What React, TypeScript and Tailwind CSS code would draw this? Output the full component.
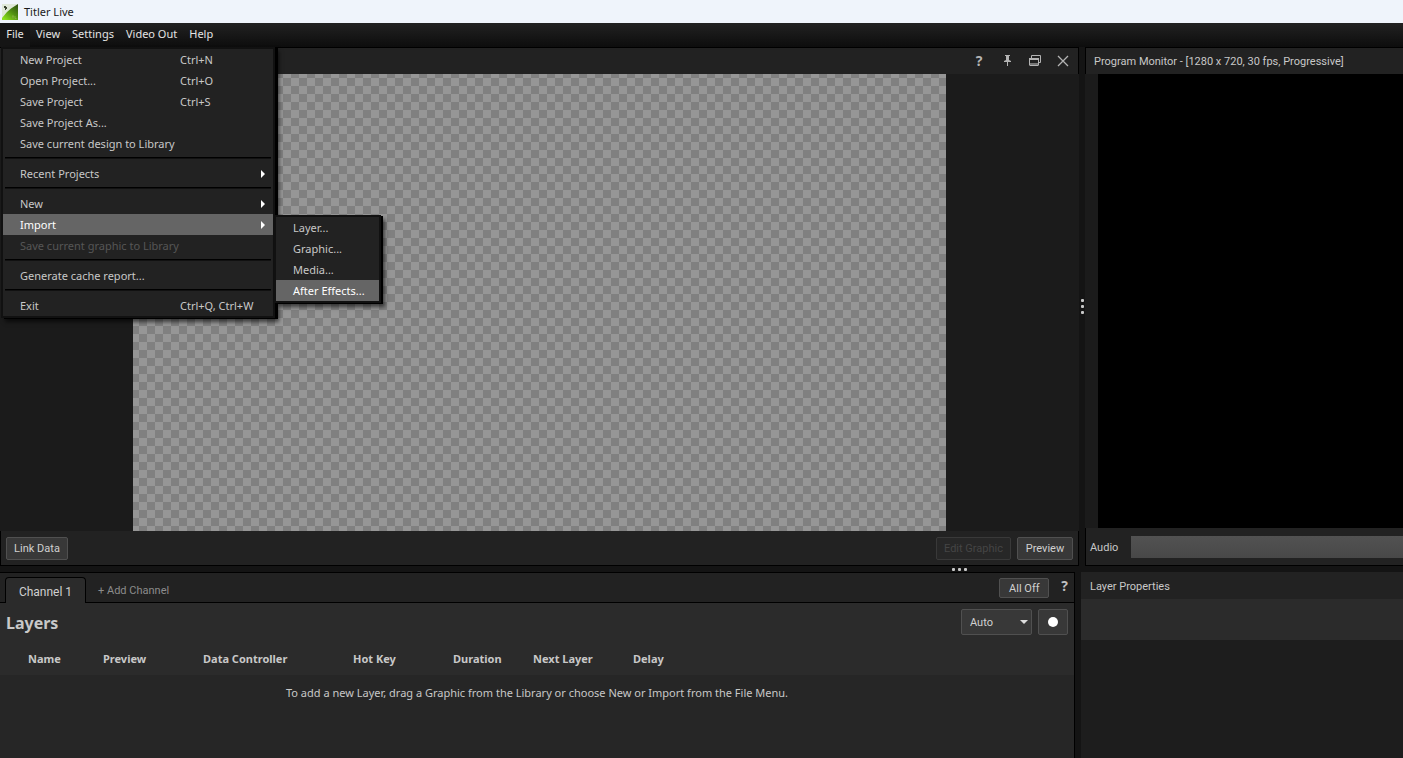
import type { ReactNode } from 'react';
import { clsx } from 'clsx';

interface MenuEntry {
  label: string;
  shortcut?: string;
  disabled?: boolean;
  active?: boolean;
  hasSubmenu?: boolean;
  children?: MenuEntry[];
}

const FILE_MENU: MenuEntry[][] = [
  [
    { label: 'New Project', shortcut: 'Ctrl+N' },
    { label: 'Open Project...', shortcut: 'Ctrl+O' },
    { label: 'Save Project', shortcut: 'Ctrl+S' },
    { label: 'Save Project As...' },
    { label: 'Save current design to Library' },
  ],
  [{ label: 'Recent Projects', hasSubmenu: true }],
  [
    { label: 'New', hasSubmenu: true },
    {
      label: 'Import',
      active: true,
      hasSubmenu: true,
      children: [
        { label: 'Layer...' },
        { label: 'Graphic...' },
        { label: 'Media...' },
        { label: 'After Effects...', active: true },
      ],
    },
    { label: 'Save current graphic to Library', disabled: true },
  ],
  [{ label: 'Generate cache report...' }],
  [{ label: 'Exit', shortcut: 'Ctrl+Q, Ctrl+W' }],
];

const COLUMNS = [
  { label: 'Name', className: 'w-[103px] pl-7' },
  { label: 'Preview', className: 'w-[100px]' },
  { label: 'Data Controller', className: 'w-[150px]' },
  { label: 'Hot Key', className: 'w-[100px]' },
  { label: 'Duration', className: 'w-[80px]' },
  { label: 'Next Layer', className: 'w-[100px]' },
  { label: 'Delay', className: '' },
];

function AppLogo() {
  return (
    <svg viewBox="0 0 16 16" className="size-4" aria-hidden="true">
      <defs>
        <linearGradient id="logo-green" x1="1" y1="0" x2="0.2" y2="1">
          <stop offset="0" stopColor="#2c4a10" />
          <stop offset="0.5" stopColor="#4f8f12" />
          <stop offset="1" stopColor="#8be01c" />
        </linearGradient>
      </defs>
      <rect width="16" height="16" fill="url(#logo-green)" />
      <path d="M0 0h16L9 4.5 5 8 0 14z" fill="#dfe8d8" />
      <path d="M2 2h2v1h1v2H4v1H3V4H2z" fill="#39422f" />
      <path d="M10 12h2M11 12v2.5M13 12v2.5h1.5" stroke="#8fb64f" strokeWidth="0.7" fill="none" />
    </svg>
  );
}

function MenuItem({ entry }: { entry: MenuEntry }) {
  return (
    <li role="none" className="relative">
      <button
        type="button"
        role="menuitem"
        disabled={entry.disabled}
        className={clsx(
          'flex h-[21px] w-full items-center pl-[17px] text-left whitespace-nowrap',
          entry.active && 'bg-[#656565] text-white',
          entry.disabled && 'text-[#565656]',
        )}
      >
        <span className={clsx('pt-0.5', entry.shortcut ? 'w-40' : 'flex-1')}>{entry.label}</span>
        {entry.shortcut && <span className="pt-0.5">{entry.shortcut}</span>}
        {entry.hasSubmenu && (
          <svg viewBox="0 0 4 8" className="mr-2 h-2 w-1" aria-hidden="true">
            <path d="M0 0l4 4-4 4z" fill="#fff" />
          </svg>
        )}
      </button>
      {entry.children && (
        <ul
          role="menu"
          className="absolute top-px left-full ml-px w-[107px] border-2 border-[#111] bg-[#222] text-[#c8c8c8] shadow-[2px_1px_0_#000,4px_4px_4px_rgba(0,0,0,0.6)]"
        >
          {entry.children.map((child) => (
            <MenuItem key={child.label} entry={child} />
          ))}
        </ul>
      )}
    </li>
  );
}

function FileMenu() {
  return (
    <div
      role="menu"
      className="absolute top-full left-px z-20 w-[274px] border-2 border-[#111] bg-[#222] text-[#c8c8c8] shadow-[3px_1px_0_#000,4px_4px_4px_rgba(0,0,0,0.6)]"
    >
      {FILE_MENU.map((group, i) => (
        <div key={group[0].label}>
          {i > 0 && (
            <div role="separator" className="h-[9px] px-0.5 pt-[3px]">
              <div className="h-0.5 border-t border-black bg-[#111]" />
            </div>
          )}
          <ul role="none">
            {group.map((entry) => (
              <MenuItem key={entry.label} entry={entry} />
            ))}
          </ul>
        </div>
      ))}
    </div>
  );
}

function MenuBar() {
  return (
    <nav className="flex h-6 shrink-0 bg-linear-to-b from-[#222] to-[#0d0d0d] text-[11px] text-[#e4e4e4]">
      <div className="relative">
        <button type="button" aria-haspopup="menu" className="h-full w-[30px] bg-[#151515] pb-0.5">
          File
        </button>
        <FileMenu />
      </div>
      {['View', 'Settings', 'Video Out', 'Help'].map((label) => (
        <button key={label} type="button" aria-haspopup="menu" className="px-1.5 pb-0.5">
          {label}
        </button>
      ))}
    </nav>
  );
}

function PushButton({ children, disabled, className }: { children: ReactNode; disabled?: boolean; className?: string }) {
  return (
    <button
      type="button"
      disabled={disabled}
      className={clsx(
        'rounded-xs border font-[Roboto,sans-serif] text-[11px] whitespace-nowrap',
        disabled ? 'border-[#393939] bg-[#272727] text-[#454545]' : 'border-[#505050] bg-[#383838] text-[#d0d0d0]',
        className,
      )}
    >
      {children}
    </button>
  );
}

function PanelTitle({ children }: { children: ReactNode }) {
  return <h2 className="pt-0.5 font-[Roboto,sans-serif] text-[11px] text-[#c8c8c8]">{children}</h2>;
}

function WindowControls() {
  return (
    <div className="flex items-center gap-4 pr-[9px] text-[#b4b4b4]">
      <button type="button" aria-label="Help" className="w-3 text-sm font-bold">
        ?
      </button>
      <button type="button" aria-label="Pin">
        <svg viewBox="0 0 12 12" className="size-3" aria-hidden="true">
          <path d="M4 0h5v1H8v4l2 1v1H7v4H6V7H3V6l2-1V1H4z" fill="currentColor" />
        </svg>
      </button>
      <button type="button" aria-label="Restore">
        <svg viewBox="0 0 12 12" className="size-3" aria-hidden="true">
          <path d="M2.5 3V0.5h9v7H10" fill="none" stroke="currentColor" />
          <rect x="0.5" y="3.5" width="9" height="7" rx="0.5" fill="#222" stroke="currentColor" />
          <path d="M0 3h10v2H0z" fill="currentColor" />
          <path d="M1 8h8v2H1z" fill="#777" />
        </svg>
      </button>
      <button type="button" aria-label="Close">
        <svg viewBox="0 0 12 12" className="size-3" aria-hidden="true">
          <path d="M1 1l10 10M11 1L1 11" stroke="currentColor" strokeWidth="1.3" />
        </svg>
      </button>
    </div>
  );
}

function Dots({ vertical }: { vertical?: boolean }) {
  return (
    <div className={clsx('flex gap-[3px]', vertical && 'flex-col')}>
      {[0, 1, 2].map((n) => (
        <span key={n} className="size-[3px] rounded-[1px] bg-[#c8c8c8]" />
      ))}
    </div>
  );
}

function DesignPanel() {
  return (
    <section className="flex min-w-0 flex-1 flex-col">
      <header className="flex h-[27px] shrink-0 justify-end border-t border-r border-black bg-[#222]">
        <WindowControls />
      </header>
      <div className="flex min-h-0 flex-1 justify-center bg-[#1b1b1b]">
        <div className="aspect-video h-full bg-[conic-gradient(#969696_25%,#808080_0_50%,#969696_0_75%,#808080_0)] bg-size-[16px_16px] bg-position-[6px_4px]" />
      </div>
      <footer className="flex h-[35px] shrink-0 items-center border-x border-b border-black bg-[#222] px-[5px]">
        <PushButton className="h-[23px] w-[62px] pt-0.5">Link Data</PushButton>
        <PushButton disabled className="ml-auto h-[23px] w-[75px] pt-0.5">
          Edit Graphic
        </PushButton>
        <PushButton className="ml-1.5 h-[23px] w-14 pt-0.5">Preview</PushButton>
      </footer>
    </section>
  );
}

function ProgramMonitor() {
  return (
    <section className="flex w-[318px] shrink-0 flex-col">
      <header className="flex h-[27px] shrink-0 items-center border-t border-l border-black bg-[#222] pl-2">
        <PanelTitle>Program Monitor - [1280 x 720, 30 fps, Progressive]</PanelTitle>
      </header>
      <div className="flex-1 bg-[#1b1b1b] pl-[13px]">
        <div className="h-full bg-black" />
      </div>
      <footer className="flex h-[38px] shrink-0 items-center border-b border-l border-black bg-[#222] pl-1">
        <span className="w-[41px] pt-1 font-[Roboto,sans-serif] text-[11px] text-[#c8c8c8]">Audio</span>
        <div className="h-[22px] flex-1 bg-linear-to-b from-[#525252] to-[#484848]" />
      </footer>
    </section>
  );
}

function LayersPanel() {
  return (
    <section className="flex min-w-0 flex-1 flex-col border-t border-r border-black bg-[#262626]">
      <div className="flex h-[30px] shrink-0 items-end bg-[#222] font-[Roboto,sans-serif]">
        <div className="h-full w-[5px] border-b border-black" />
        <button
          type="button"
          className="h-[26px] w-[81px] rounded-t-sm border border-b-0 border-black bg-[#2b2b2b] pt-0.5 text-xs text-[#d0d0d0]"
        >
          Channel 1
        </button>
        <div className="flex h-full flex-1 items-center border-b border-black pt-2">
          <button type="button" className="ml-3 text-[11px] text-[#8c8c8c]">
            + Add Channel
          </button>
        </div>
        <div className="flex h-full items-center gap-3 border-b border-black pt-px pr-1.5">
          <PushButton className="h-5 w-[50px] pt-0.5">All Off</PushButton>
          <button
            type="button"
            aria-label="Help"
            className="pb-1 font-['Open_Sans',sans-serif] text-sm leading-5 font-bold text-[#c0c0c0]"
          >
            ?
          </button>
        </div>
      </div>
      <div className="flex h-10 shrink-0 items-center bg-[#2b2b2b] px-1.5 pb-0.5">
        <h2 className="flex-1 pt-0.5 text-base font-bold text-[#c8c8c8]">Layers</h2>
        <div className="relative">
          <select
            aria-label="Mode"
            className="block h-[26px] w-[71px] appearance-none rounded-xs border border-[#505050] bg-[#383838] pt-0.5 pl-2 font-[Roboto,sans-serif] text-[11px] text-[#d0d0d0]"
          >
            <option>Auto</option>
          </select>
          <svg viewBox="0 0 8 4" className="pointer-events-none absolute top-[11px] right-1 h-1 w-2" aria-hidden="true">
            <path d="M0 0h8L4 4z" fill="#ddd" />
          </svg>
        </div>
        <PushButton className="ml-1.5 flex h-[26px] w-[30px] items-center justify-center">
          <span className="size-2.5 rounded-full bg-white" />
        </PushButton>
      </div>
      <table className="w-full table-fixed text-[11px] text-[#c8c8c8]">
        <thead className="bg-[#2b2b2b]">
          <tr className="h-8">
            {COLUMNS.map((col) => (
              <th key={col.label} className={clsx('p-0 text-left font-bold', col.className)}>
                {col.label}
              </th>
            ))}
          </tr>
        </thead>
        <tbody>
          <tr className="h-9">
            <td colSpan={COLUMNS.length} className="p-0 text-center">
              To add a new Layer, drag a Graphic from the Library or choose New or Import from the File Menu.
            </td>
          </tr>
        </tbody>
      </table>
    </section>
  );
}

function LayerProperties() {
  return (
    <section className="flex w-[322px] shrink-0 flex-col bg-[#1d1d1d]">
      <header className="flex h-[27px] shrink-0 items-center bg-[#222] pt-0.5 pl-[9px]">
        <PanelTitle>Layer Properties</PanelTitle>
      </header>
      <div className="h-[41px] bg-[#2b2b2b]" />
    </section>
  );
}

export default function App() {
  return (
    <div className="flex h-screen flex-col overflow-hidden bg-[#141414] font-['Noto_Sans','Open_Sans',sans-serif]">
      <header className="flex h-[23px] shrink-0 items-center gap-1.5 bg-[#eff4fb] pl-0.5">
        <AppLogo />
        <h1 className="pt-0.5 text-[11px] text-[#1a1a1a]">Titler Live</h1>
      </header>
      <MenuBar />
      <main className="flex min-h-0 flex-1 flex-col">
        <div className="flex min-h-0 flex-1">
          <DesignPanel />
          <div className="flex w-1.5 shrink-0 items-center justify-center">
            <Dots vertical />
          </div>
          <ProgramMonitor />
        </div>
        <div className="flex h-1.5 shrink-0 items-center pl-[952px]">
          <Dots />
        </div>
        <div className="flex h-[186px] shrink-0 gap-1.5">
          <LayersPanel />
          <LayerProperties />
        </div>
      </main>
    </div>
  );
}
